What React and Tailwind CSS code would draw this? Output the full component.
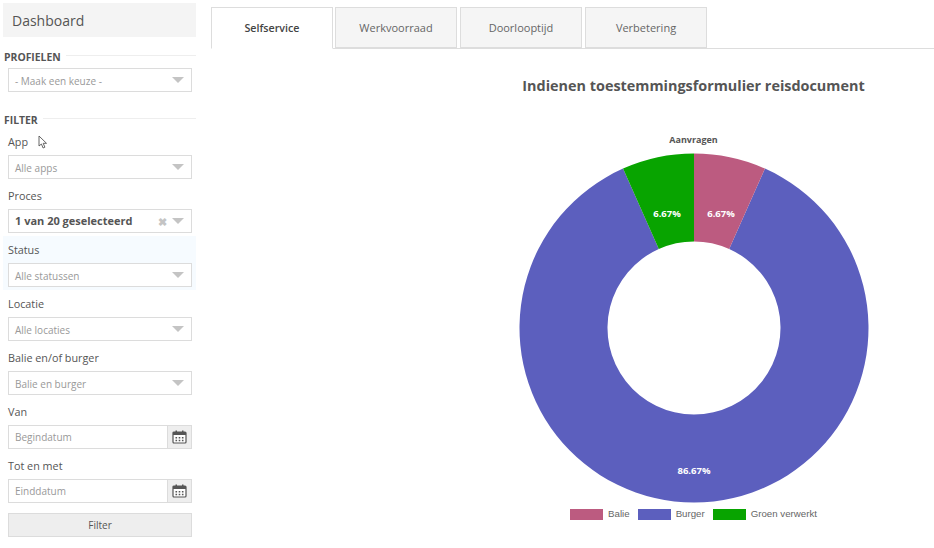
const font = { fontFamily: '"Open Sans", sans-serif' };

function Caret() {
  return <span className="w-0 h-0 border-x-[6px] border-x-transparent border-t-[6px] border-t-[#c4c4c4]" />;
}

function Select({ text, bold, clear }) {
  return (
    <div className="h-6 border border-[#dcdcdc] bg-white flex items-center pl-[6px] pr-[7px]">
      <span className={bold ? "flex-1 text-[11px] font-bold text-[#555]" : "flex-1 text-[10px] pt-[2px] text-[#999]"}>{text}</span>
      {clear && <span className="text-[#c4c4c4] text-[11px] font-bold leading-none mr-[5px]">✖</span>}
      <Caret />
    </div>
  );
}

function CalendarIcon() {
  return (
    <svg width="15" height="14" viewBox="0 0 15 14" fill="none">
      <rect x="1" y="2" width="13" height="11" rx="1" fill="#fff" stroke="#555" strokeWidth="1.2" />
      <rect x="1" y="2" width="13" height="3" fill="#555" />
      <rect x="3.5" y="0.5" width="1.5" height="2.5" fill="#555" />
      <rect x="10" y="0.5" width="1.5" height="2.5" fill="#555" />
      <path d="M3.5 7h1.6v1.4H3.5zM6.7 7h1.6v1.4H6.7zM9.9 7h1.6v1.4H9.9zM3.5 9.8h1.6v1.4H3.5zM6.7 9.8h1.6v1.4H6.7zM9.9 9.8h1.6v1.4H9.9z" fill="#555" />
    </svg>
  );
}

function DateInput({ text }) {
  return (
    <div className="h-6 border border-[#dcdcdc] bg-white flex items-stretch">
      <span className="flex-1 pl-[6px] text-[10px] text-[#999] leading-[22px]">{text}</span>
      <span className="w-[24px] bg-[#eeeeee] border-l border-[#dcdcdc] flex items-center justify-center">
        <CalendarIcon />
      </span>
    </div>
  );
}

function Group({ label, tint, children }) {
  return (
    <div className={`h-[54px] pl-[5px] pr-[4px] ${tint ? "bg-[#f6fbff]" : ""}`}>
      <div className="h-[27px] pt-[5px] text-[10.8px] leading-[18px] text-[#555]">{label}</div>
      {children}
    </div>
  );
}

function SectionHead({ text }) {
  return (
    <div className="flex items-center gap-[5px] h-[14px] pl-px">
      <span className="text-[10.4px] font-bold text-[#555] leading-none">{text}</span>
      <span className="flex-1 h-px bg-[#eeeeee] -translate-y-[2px]" />
    </div>
  );
}

function Tab({ text, active }) {
  return (
    <div
      className={
        active
          ? "w-[122px] h-[42px] -mb-px -mr-px border border-[#dddddd] border-b-white bg-white flex items-center justify-center text-[10.7px] font-semibold text-[#444]"
          : "w-[122px] h-[41px] pt-px border border-[#dddddd] bg-[#f5f5f5] flex items-center justify-center text-[11px] text-[#666]"
      }
    >
      {text}
    </div>
  );
}

function LegendItem({ color, text }) {
  return (
    <div className="flex items-center gap-[5px]">
      <span className="w-[33px] h-[11px]" style={{ backgroundColor: color }} />
      <span className="text-[9.7px] text-[#666]" style={{ fontFamily: '"Liberation Sans", sans-serif' }}>{text}</span>
    </div>
  );
}

const CX = 175, CY = 175, R = 174.5, r = 86.5;
function arc(a0, a1) {
  const p = (rad, a) => {
    const t = ((a - 90) * Math.PI) / 180;
    return `${(CX + rad * Math.cos(t)).toFixed(2)} ${(CY + rad * Math.sin(t)).toFixed(2)}`;
  };
  const large = a1 - a0 > 180 ? 1 : 0;
  return `M${p(R, a0)}A${R} ${R} 0 ${large} 1 ${p(R, a1)}L${p(r, a1)}A${r} ${r} 0 ${large} 0 ${p(r, a0)}Z`;
}

function Donut() {
  const lab = { fontFamily: '"Open Sans", sans-serif', fontSize: 9.5, fontWeight: 700, fill: "#fff", textAnchor: "middle" };
  return (
    <svg width="350" height="350" viewBox="0 0 350 350">
      <path d={arc(24, 336)} fill="#5c5fbe" />
      <path d={arc(0, 24)} fill="#bc5b80" />
      <path d={arc(336, 360)} fill="#08a400" />
      <text x="148" y="64" style={lab}>6.67%</text>
      <text x="202" y="64" style={lab}>6.67%</text>
      <text x="175" y="321" style={lab}>86.67%</text>
    </svg>
  );
}

export default function App() {
  return (
    <div className="relative w-[934px] h-[548px] bg-white flex overflow-hidden" style={font}>
      <aside className="w-[193px] ml-[3px] shrink-0 pt-[3px]">
        <div className="h-[34px] bg-[#f4f4f4] pl-[9px] flex items-center text-[14px] text-[#555]">Dashboard</div>
        <div className="mt-[13px]">
          <SectionHead text="PROFIELEN" />
        </div>
        <div className="mt-[4px] pl-[5px] pr-[4px]">
          <Select text="- Maak een keuze -" />
        </div>
        <div className="mt-[21px] mb-px">
          <SectionHead text="FILTER" />
        </div>
        <Group label="App"><Select text="Alle apps" /></Group>
        <Group label="Proces"><Select text="1 van 20 geselecteerd" bold clear /></Group>
        <Group label="Status" tint><Select text="Alle statussen" /></Group>
        <Group label="Locatie"><Select text="Alle locaties" /></Group>
        <Group label="Balie en/of burger"><Select text="Balie en burger" /></Group>
        <Group label="Van"><DateInput text="Begindatum" /></Group>
        <Group label="Tot en met"><DateInput text="Einddatum" /></Group>
        <div className="ml-[5px] mr-[4px] mt-[7px] h-6 pt-px border border-[#dcdcdc] bg-[#eeeeee] flex items-center justify-center text-[10px] text-[#555]">Filter</div>
      </aside>

      <main className="ml-[15px] flex-1 min-w-0 pt-[7px]">
        <div className="flex gap-[3px] border-b border-[#dddddd] h-[42px]">
          <Tab text="Selfservice" active />
          <Tab text="Werkvoorraad" />
          <Tab text="Doorlooptijd" />
          <Tab text="Verbetering" />
        </div>
        <div className="ml-[242px] w-[481px] flex flex-col items-center">
          <h1 className="mt-[26px] h-[22px] text-[14.4px] leading-[22px] font-bold text-[#555]">Indienen toestemmingsformulier reisdocument</h1>
          <div className="mt-[36px] h-[14px] text-[9px] leading-[14px] font-bold text-[#555]">Aanvragen</div>
          <div className="mt-[6px]"><Donut /></div>
          <div className="flex gap-[8px] mt-[4px]">
            <LegendItem color="#bc5b80" text="Balie" />
            <LegendItem color="#5c5fbe" text="Burger" />
            <LegendItem color="#08a400" text="Groen verwerkt" />
          </div>
        </div>
      </main>

      <svg className="absolute left-[38px] top-[135px]" width="10" height="14" viewBox="0 0 10 14">
        <path d="M1 1v10l2.4-2 1.7 4 1.8-.8-1.7-3.9H8.5z" fill="#fff" stroke="#555" strokeWidth="0.9" />
      </svg>
    </div>
  );
}
